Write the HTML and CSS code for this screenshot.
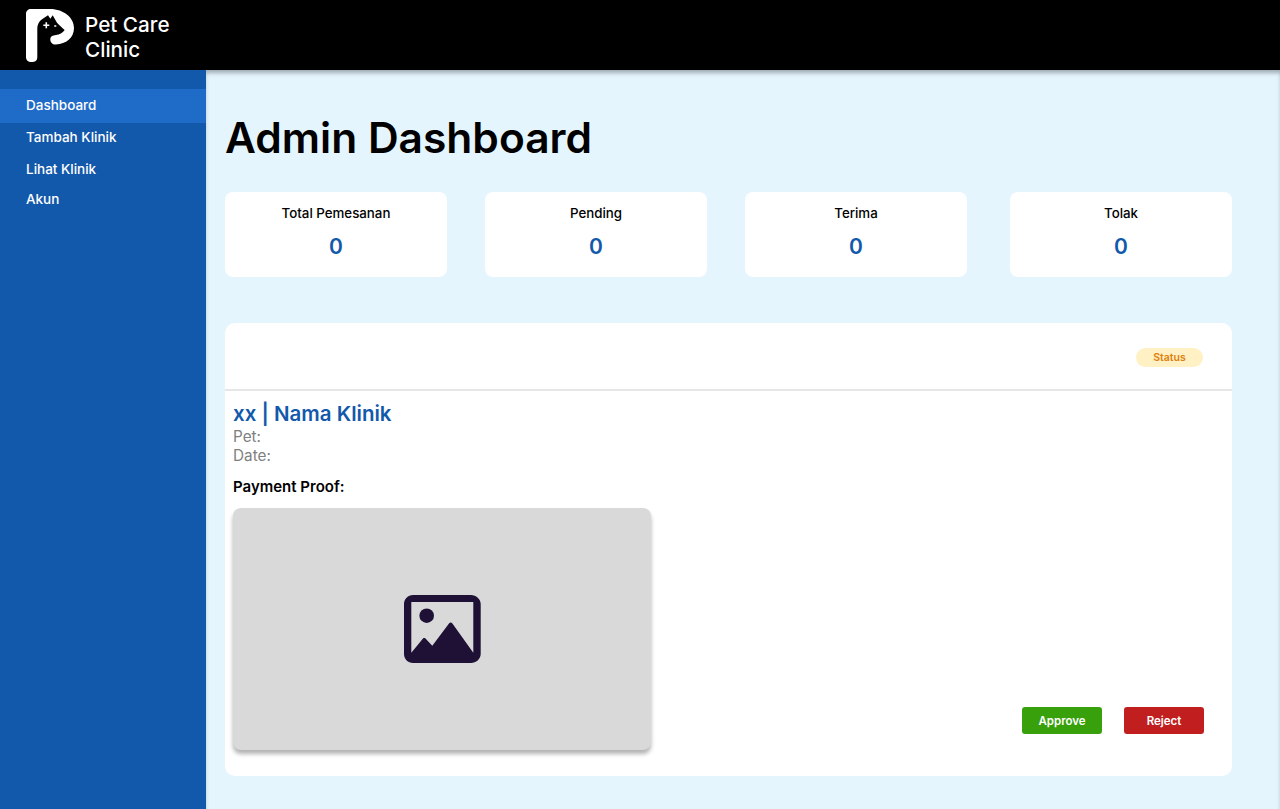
FILE: index.html
```html
<!DOCTYPE html>
<html lang="en">
  <head>
    <meta charset="UTF-8" />
    <meta name="viewport" content="width=device-width, initial-scale=1.0" />
    <title>Admin Dashboard</title>
    <link rel="stylesheet" href="styles.css">
  </head>
  <body>
    <header class="topbar">
      <svg class="logo" width="49" height="54" viewBox="0 0 49 54">
        <path fill="#fff" d="M5 0H24C38 0 48 9 48 19C48 29 40 35 30 35.500C26.500 35.700 24.300 33.500 24.300 30.500C24.300 27.500 26.500 26.300 30 26C33.500 25.500 36.500 24 38.700 21C36 18.500 33 16 31 13.700L26.700 6.300L24.300 9.700L22 6.300L16 10.300C13 12.500 11.300 16 11.300 19V48C11.300 52 9 53 5.500 53C2 53 0 51 0 48V5C0 2 2 0 5 0Z"/>
        <path fill="#fff" d="M19.500 13.300H21.100V15.500H23.300V17.100H21.100V19.300H19.500V17.100H17.300V15.500H19.500ZM28.300 16.300H30.300V17.700H28.300Z"/>
      </svg>
      <div class="brand">Pet Care<br>Clinic</div>
    </header>

    <div class="layout">
      <nav class="sidebar">
        <a class="nav-item active">Dashboard</a>
        <a class="nav-item">Tambah Klinik</a>
        <a class="nav-item">Lihat Klinik</a>
        <a class="nav-item akun">Akun</a>
      </nav>

      <main class="content">
        <h1>Admin Dashboard</h1>

        <div class="stats">
          <div class="stat">
            <div class="stat-label">Total Pemesanan</div>
            <div class="stat-value">0</div>
          </div>
          <div class="stat">
            <div class="stat-label">Pending</div>
            <div class="stat-value">0</div>
          </div>
          <div class="stat">
            <div class="stat-label">Terima</div>
            <div class="stat-value">0</div>
          </div>
          <div class="stat stat-last">
            <div class="stat-label">Tolak</div>
            <div class="stat-value">0</div>
          </div>
        </div>

        <section class="booking">
          <div class="booking-head">
            <span class="status">Status</span>
          </div>
          <div class="booking-body">
            <div class="booking-info">
              <h2>xx | Nama Klinik</h2>
              <p class="meta">Pet:</p>
              <p class="meta">Date:</p>
              <h4>Payment Proof:</h4>
              <div class="proof">
                <svg width="78" height="70" viewBox="0 0 78 70">
                  <path fill="#1e1135" fill-rule="evenodd" d="M10 1H68C73 1 77.700 5 77.700 10V60C77.700 65 73 69 68 69H10C5 69 1 65 1 60V10C1 5 5 1 10 1ZM8.300 8V58.700L20 44.500C20.800 43.900 21.800 43.900 22.500 44.500L29.300 51.700L46 29.500C47 28.300 48.400 28.300 49.400 29.500L70.300 58.700V8Z"/>
                  <circle cx="23.700" cy="21.700" r="7.300" fill="#1e1135"/>
                </svg>
              </div>
            </div>
            <div class="actions">
              <button class="btn approve">Approve</button>
              <button class="btn reject">Reject</button>
            </div>
          </div>
        </section>
      </main>
    </div>
  </body>
</html>
```

FILE: styles.css
```css
* {
  box-sizing: border-box;
}
html,
body {
  height: 100%;
}
body {
  margin: 0;
  font-family: Inter, "Noto Sans", sans-serif;
  background-color: #e4f5fe;
  color: #000;
  overflow: hidden;
}
.topbar {
  height: 70px;
  background-color: #000;
  display: flex;
  align-items: flex-start;
  padding: 9px 0 0 26px;
  gap: 10px;
}
.logo {
  flex: none;
}
.brand {
  color: #fff;
  font-size: 20.700px;
  font-weight: 500;
  line-height: 25px;
  margin-top: 3px;
}
.layout {
  display: flex;
  height: 739px;
}
.sidebar {
  width: 206px;
  flex: none;
  background-color: #1259ab;
  padding-top: 19px;
}
.nav-item {
  display: block;
  height: 32px;
  line-height: 32px;
  padding-left: 26px;
  color: #fff;
  font-size: 13.500px;
  font-weight: 500;
}
.nav-item.active {
  height: 34px;
  margin-bottom: -2px;
  line-height: 32px;
  background-color: #1f6bc8;
}
.nav-item.akun {
  height: 28px;
  line-height: 28px;
}
.content {
  flex: 1;
  padding: 0 48px 0 19px;
  box-shadow: inset 0 4px 4px -1px rgba(0, 0, 0, 0.3);
}
h1 {
  margin: 42px 0 29px;
  font-size: 42.500px;
  font-weight: 600;
  line-height: 51px;
}
.stats {
  display: flex;
  gap: 38px;
}
.stat {
  width: 222px;
  height: 85px;
  background-color: #fff;
  border-radius: 8px;
  text-align: center;
  padding-top: 13px;
}
.stat-last {
  margin-left: 5px;
}
.stat-label {
  font-size: 13.300px;
  font-weight: 500;
  line-height: 17px;
}
.stat-value {
  margin-top: 12px;
  font-size: 21px;
  font-weight: 600;
  line-height: 25px;
  color: #1259ab;
}
.booking {
  margin-top: 46px;
  height: 453px;
  background-color: #fff;
  border-radius: 10px;
}
.booking-head {
  height: 68px;
  border-bottom: 2px solid #e6e6e6;
  display: flex;
  justify-content: flex-end;
  padding: 25px 29px 0 0;
}
.status {
  width: 67px;
  height: 19px;
  border-radius: 10px;
  background-color: #fff1c4;
  color: #e07f0c;
  font-size: 10.500px;
  font-weight: 600;
  line-height: 19px;
  text-align: center;
}
.booking-body {
  display: flex;
  justify-content: space-between;
  align-items: flex-end;
  padding: 11px 28px 0 8px;
}
h2 {
  margin: 0 0 1px;
  font-size: 20.500px;
  font-weight: 600;
  line-height: 24px;
  color: #1259ab;
}
.meta {
  margin: 0;
  font-size: 15.300px;
  line-height: 19px;
  color: #808080;
}
h4 {
  margin: 13px 0 12px;
  font-size: 15px;
  font-weight: 600;
  line-height: 18px;
}
.proof {
  width: 418px;
  height: 242px;
  background-color: #d9d9d9;
  border-radius: 8px;
  box-shadow: 0 4px 4px rgba(0, 0, 0, 0.3);
  display: flex;
  align-items: center;
  justify-content: center;
}
.actions {
  display: flex;
  gap: 22px;
  padding-bottom: 16px;
}
.btn {
  width: 80px;
  height: 27px;
  border: none;
  border-radius: 3px;
  color: #fff;
  font-family: inherit;
  font-size: 11.500px;
  font-weight: 600;
  cursor: pointer;
}
.approve {
  background-color: #38a00a;
}
.reject {
  background-color: #c11f1f;
}
```
